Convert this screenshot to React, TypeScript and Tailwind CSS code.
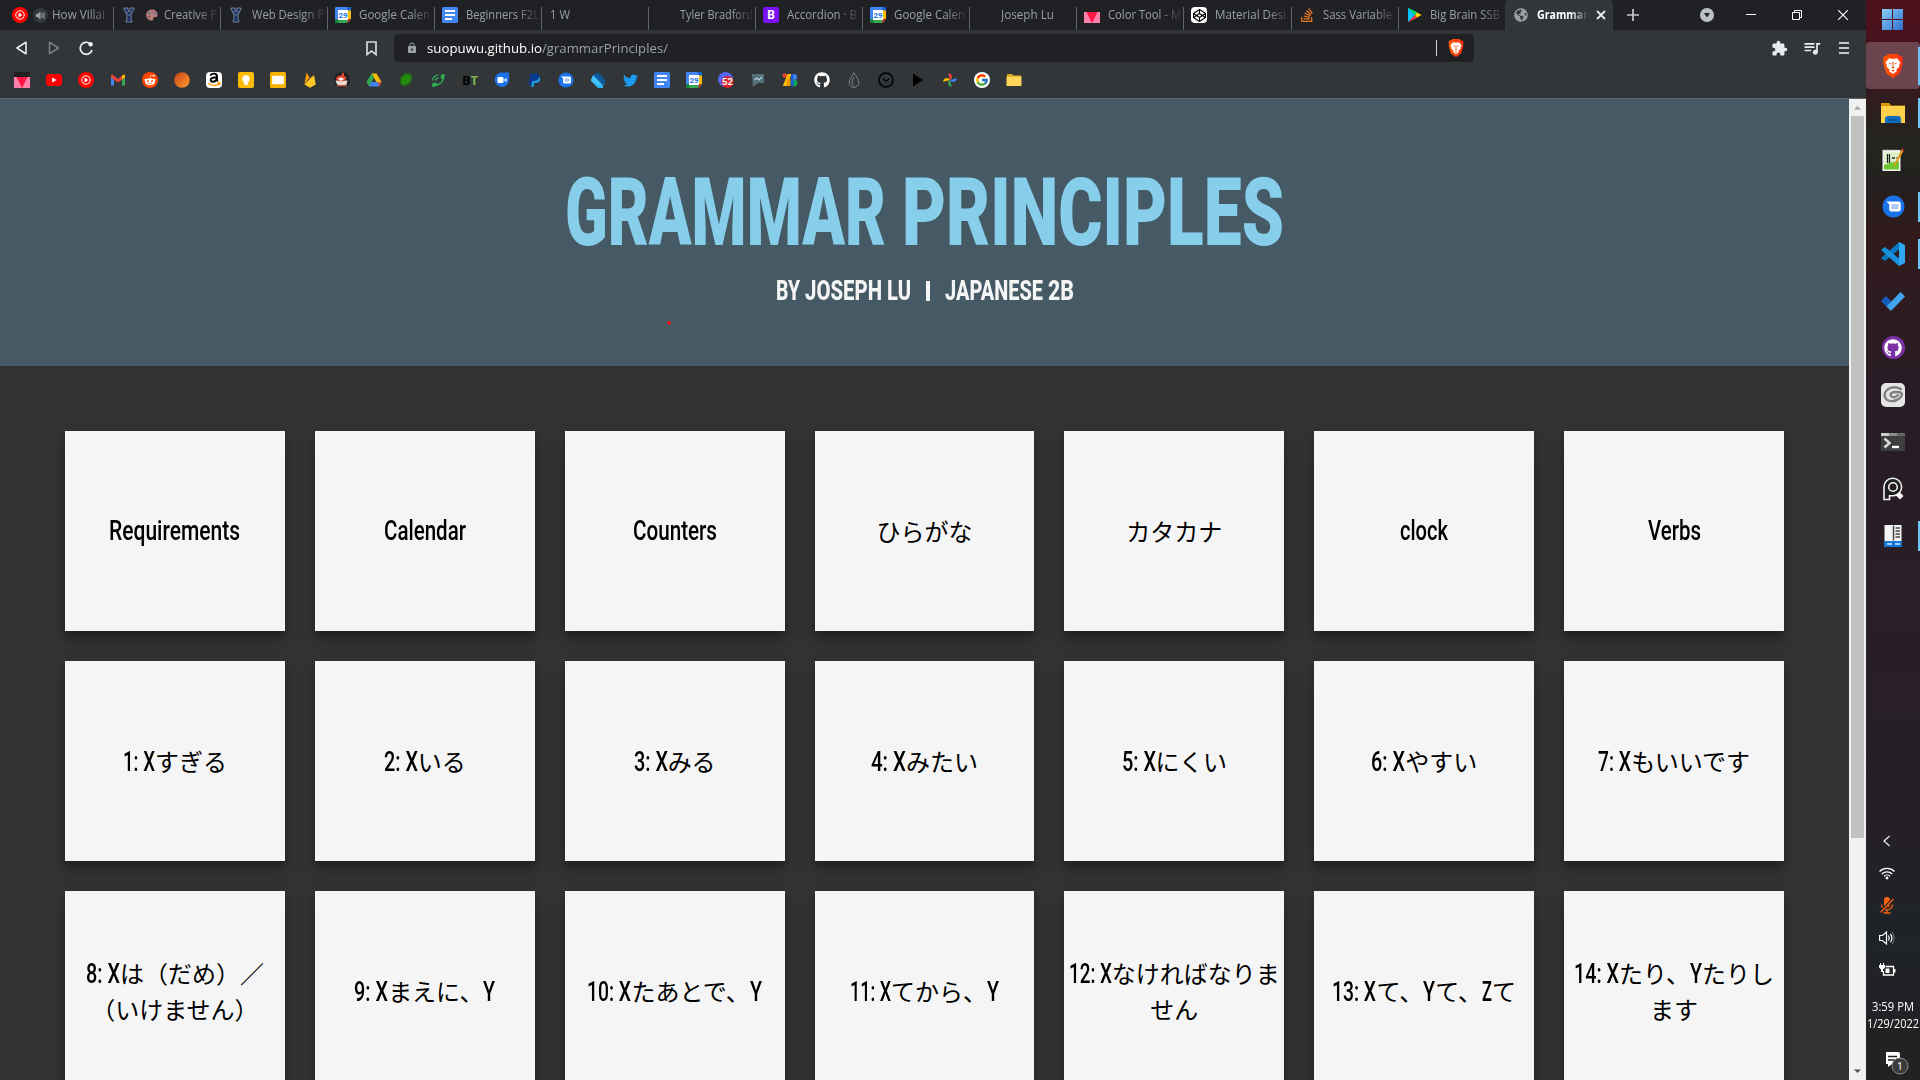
import { useLayoutEffect, useRef, useState, type ReactNode } from "react";
import { FaGithub, FaTwitter, FaPaypal, FaAmazon, FaRedditAlien, FaStackOverflow, FaCodepen, FaGlobeAmericas } from "react-icons/fa";
import { FcGoogle } from "react-icons/fc";
import { MdExtension, MdQueueMusic, MdLock, MdPhoneInTalk } from "react-icons/md";

/* Text squeezed or stretched horizontally to an exact width. */
function Fit({ w, className = "", children }: { w: number; className?: string; children: ReactNode }) {
  const ref = useRef<HTMLSpanElement>(null);
  const [s, setS] = useState(1);
  useLayoutEffect(() => {
    const el = ref.current;
    if (el && el.offsetWidth) setS(w / (el.getBoundingClientRect().width / s));
  }, [w]);
  return (
    <span className="inline-block whitespace-pre text-left" style={{ width: w }}>
      <span ref={ref} className={"inline-block origin-left " + className} style={{ transform: `scaleX(${s})` }}>
        {children}
      </span>
    </span>
  );
}

/* ---------- small icons ---------- */
const I = ({ children, s = 16 }: { children: ReactNode; s?: number }) => (
  <svg width={s} height={s} viewBox="0 0 16 16" className="block shrink-0">{children}</svg>
);
const YTMusic = () => (
  <I><circle cx="8" cy="8" r="8" fill="#f00" /><circle cx="8" cy="8" r="4.200" fill="none" stroke="#fff" /><path d="M6.500 5.600v4.800L10.400 8z" fill="#fff" /></I>
);
const Yorba = () => (
  <I><path d="M3 1h4v2l1 2 1-2V1h4v2l-1 .5L10 8v5l1 .5V15H5v-1.500l1-.5V8L4 3.500 3 3z" fill="#1b2f5e" stroke="#8b97b3" strokeWidth=".8" /><path d="M5 4l3 5 3-5" fill="none" stroke="#8b97b3" strokeWidth=".5" /></I>
);
const Palette = () => (
  <svg width="12" height="12" viewBox="0 0 12 12" className="block shrink-0">
    <path d="M6 .5a5.500 5.500 0 1 0 1 10.800c1-.4-.6-1.800.4-2.800 1-.9 4 .6 4.100-2.500C11.500 2.500 9 .5 6 .5z" fill="#b8817e" />
    <circle cx="3.400" cy="4.200" r="1.100" fill="#3b8a5a" /><circle cx="6.300" cy="2.600" r="1.100" fill="#b54a8a" /><circle cx="9" cy="4.500" r="1" fill="#3f66ad" /><circle cx="3.200" cy="7.500" r="1" fill="#803b3b" />
  </svg>
);
const Calendar = () => (
  <I>
    <path d="M1 0h11v4H0V1a1 1 0 0 1 1-1z" fill="#4285f4" /><path d="M0 3.500h4V13H0z" fill="#4285f4" />
    <path d="M12 0h3a1 1 0 0 1 1 1v3h-4z" fill="#1967d2" /><path d="M12.500 3.500H16V12h-3.500z" fill="#fbbc04" />
    <path d="M0 12.500h12.500V16H1a1 1 0 0 1-1-1z" fill="#34a853" /><path d="M0 12.500h3.500V16H1a1 1 0 0 1-1-1z" fill="#188038" /><path d="M12.500 12.500H16L12.500 16z" fill="#ea4335" />
    <path d="M3 3h10v10H3z" fill="#fff" />
    <text x="8" y="10.800" fontSize="8" fontWeight="700" textAnchor="middle" fill="#1a73e8" fontFamily="Roboto, sans-serif">29</text>
  </I>
);
const Docs = () => (
  <I><rect width="16" height="16" rx="1.500" fill="#4285f4" /><path d="M3 4h10M3 8h10M3 12h7" stroke="#fff" strokeWidth="1.800" /></I>
);
const Bootstrap = () => (
  <I><rect width="16" height="16" rx="2" fill="#7a11f8" /><text x="8" y="12.300" fontSize="12" fontWeight="700" textAnchor="middle" fill="#fff" fontFamily="Roboto, sans-serif">B</text></I>
);
const ColorTool = () => (
  <I><path d="M0 0h16v5H0z" fill="#212121" /><path d="M0 5h16v11H0z" fill="#ff80ab" /><path d="M2.500 5h11L8 16z" fill="#ff1744" /></I>
);
const Codepen = () => (
  <span className="flex size-4 items-center justify-center rounded-sm bg-white text-black"><FaCodepen size={13} /></span>
);
const Play = () => (
  <I>
    <path d="M2 .8v14.400L9 8z" fill="#00c3ff" /><path d="M2 .8 11.500 5.600 9 8z" fill="#00e676" /><path d="M2 15.200 11.500 10.400 9 8z" fill="#ff3a44" /><path d="M11.300 5.500 15.500 8l-4.200 2.500L9 8z" fill="#ffd500" />
  </I>
);
const Brave = ({ w, h }: { w: number; h: number }) => (
  <svg width={w} height={h} viewBox="0 0 20 24" className="block shrink-0">
    <defs><linearGradient id="bg" x1="0" x2="1"><stop offset="0" stopColor="#ff5a00" /><stop offset="1" stopColor="#fa2d12" /></linearGradient></defs>
    <path d="M5 0h10l2 2.200 1.800-.2L20 5l-.7 2 .5 2-2.800 9.500Q16 20 14 21.400L10 24l-4-2.600Q4 20 3 18.500L.2 9l.5-2L0 5l1.200-3L3 2.200z" fill="url(#bg)" />
    <path d="M6 4.200 10 5l4-.8 3.500 4.300-1.300 2.200.2 2-3 2.900.4 1.700L10 20l-3.800-2.700.4-1.700-3-2.900.2-2-1.300-2.200z" fill="#fff" />
    <path d="M5.500 8.700l3 .8-.8 1zM14.500 8.700l-3 .8.800 1zM9.400 8h1.200l-.2 4.500 1.300 1.300-1.700.8-1.700-.8 1.300-1.300zM8.200 16.600l1.800-.8 1.800.8-1.800 1.200z" fill="#fb4a10" />
  </svg>
);
const Messages = ({ s = 16 }: { s?: number }) => (
  <I s={s}><circle cx="8" cy="8" r="7.600" fill="#1a73e8" /><path d="M3 4.500h8.500a1.500 1.500 0 0 1 1.500 1.500v4a1.500 1.500 0 0 1-1.500 1.500h-5A1.500 1.500 0 0 1 5 10V6.500z" fill="#fff" /><path d="M6.500 6.300h5v3.600h-5z" fill="#aecbfa" /></I>
);
const Folder = () => (
  <I><path d="M1 2h5l1.500 1.500H15V6H1z" fill="#d9a520" /><path d="M.5 4.500h15V14H.5z" fill="#ffd65a" /></I>
);

const bookmarks: ReactNode[] = [
  <ColorTool />,
  <I><rect y="2" width="16" height="12" rx="3" fill="#f00" /><path d="M6.200 5.600v4.800L10.500 8z" fill="#fff" /></I>,
  <YTMusic />,
  <I><path d="M1 4v9.500h3V8z" fill="#4285f4" /><path d="M15 4v9.500h-3V8z" fill="#34a853" /><path d="M1 3l1.500-.5L8 7l5.500-4.500L15 3v2.500L8 10.500 1 5.500z" fill="#ea4335" /><path d="M12 4v3.600l3-2.200V3l-1.500-.5z" fill="#fbbc04" /></I>,
  <span className="flex size-4 items-center justify-center rounded-full bg-[#ff4500] text-white"><FaRedditAlien size={12} /></span>,
  <I><defs><linearGradient id="or" x1="0" y1="0" x2="1" y2="1"><stop offset="0" stopColor="#c9421c" /><stop offset="1" stopColor="#ff9c2a" /></linearGradient></defs><circle cx="8" cy="8" r="7.800" fill="url(#or)" /></I>,
  <span className="flex size-4 items-center justify-center overflow-hidden rounded-sm bg-white">
    <I><path d="M4.500 3.800Q5 1.600 8 1.600q3 0 3 2.800v3.200q0 1 .8 1.800M11 5.200q-6.300 0-6.300 2.600 0 1.900 2 1.900Q10.500 9.500 11 6" fill="none" stroke="#000" strokeWidth="1.900" /><path d="M2 11.300q6 4.200 11 .6M11.300 11l2.700-.2-.6 2.400" fill="none" stroke="#f90" strokeWidth="1.300" /></I>
  </span>,
  <I><rect width="16" height="16" rx="2" fill="#fbbc04" /><circle cx="8" cy="7" r="3.700" fill="#fff" /><path d="M6.200 10h3.600v3H6.200z" fill="#fff" /></I>,
  <I><rect width="16" height="16" rx="1.500" fill="#f4b400" /><path d="M2.200 3.800h11.600v8.400H2.200z" fill="#fff" /></I>,
  <I><path d="M2.500 12 4.500.5l3 5z" fill="#ffa000" /><path d="m2.500 12.500 7-8 1.500 3z" fill="#f57c00" /><path d="M2.500 12.500 12 3l1.800 9.500L8 15.800z" fill="#ffca28" /></I>,
  <I><circle cx="8" cy="8" r="8" fill="#1f2225" /><path d="M1.500 8.500h12l-1 4q-5 2-9.500 0z" fill="#f0d9cf" /><path d="M2 7Q3 3 7 4q1-4 3-3-1 3 2 4 1 3-3 4-4 1-7-2z" fill="#e8462e" /><path d="M4 7q3-3 6 0l-3 2z" fill="#fff" /><path d="M3 13.800h10" stroke="#b5553c" strokeWidth="1.500" /></I>,
  <I><path d="M5.500 1.500h5l5 8.500h-5z" fill="#fbbc04" /><path d="M5.500 1.500 8 5.700 3 14.500.5 10z" fill="#34a853" /><path d="M5.500 10h10L13 14.500H3z" fill="#4285f4" /><path d="M12 10h3.500L13 14.500z" fill="#ea4335" /></I>,
  <I><ellipse cx="8" cy="7.500" rx="6.300" ry="4.600" transform="rotate(-48 8 7.500)" fill="#258a10" /><ellipse cx="8" cy="7.500" rx="7" ry="5.400" transform="rotate(-48 8 7.500)" fill="none" stroke="#1d7a0a" strokeWidth="1.400" strokeDasharray="1 1.200" /></I>,
  <span className="text-[#2dab55]"><MdPhoneInTalk size={17} className="-scale-x-100" /></span>,
  <span className="flex w-4 justify-center font-['Open_Sans',sans-serif] text-[13px] leading-4 font-bold"><span className="text-black">B</span><span className="text-[#7fb24a]">T</span></span>,
  <I><path d="M8 .5h7v7.500A7.200 7.200 0 1 1 8 .5z" fill="#1a73e8" /><rect x="3.500" y="5" width="6" height="6" rx="1.300" fill="#fff" /><path d="m10 8 2.500-2.300v4.600z" fill="#fff" /></I>,
  <I><path d="M4.500 1.500h5.500q3.500.3 3 3.700-.8 3.800-4.800 3.800H6.300L5.500 13.500h-3z" fill="#0a3c94" /><path d="M13.300 4.800q1.500 1 .9 3-.9 3.200-4.500 3.200H8.300l-.7 4H5.200l1-6h2.500q3.700-.2 4.600-4.200z" fill="#1a9be0" /></I>,
  <Messages />,
  <I><path d="M3 3 8 .5l7 7V13h-2z" fill="#0d5a9c" /><path d="M3 3 .8 8.500 5 13l8 .3z" fill="#40c4ff" /><path d="M5 13h8v3H8z" fill="#29b6f6" /></I>,
  <span className="text-[#1d9bf0]"><FaTwitter size={15} /></span>,
  <Docs />,
  <Calendar />,
  <I><circle cx="7.500" cy="7.500" r="7.500" fill="#5865f2" /><circle cx="9.500" cy="10" r="6" fill="#d8222a" /><text x="9.500" y="13.300" fontSize="9.500" fontWeight="700" textAnchor="middle" fill="#fff" fontFamily="Roboto, sans-serif">52</text></I>,
  <I><path d="M2 2h12v9H8l-5 4z" fill="#546e7a" /><path d="m4.500 8 2.500-2 2 2 3-3" fill="none" stroke="#b4d6e4" strokeWidth="1.200" /></I>,
  <I><circle cx="2.800" cy="3.500" r="2.200" fill="#ea4335" /><path d="M5.500 2h4L5 14H.8z" fill="#fbbc04" /><path d="M4.500 7h4v7h-4z" fill="#f29900" /><circle cx="12" cy="5" r="3" fill="#4285f4" /><circle cx="12" cy="11" r="3.500" fill="#0f9d58" /><path d="M9 2h2.500v12H9z" fill="#1a5fd0" /></I>,
  <span className="text-white"><FaGithub size={16} /></span>,
  <I><path d="M8 .8Q3.200 7.500 3.200 10.600a4.800 4.800 0 0 0 9.600 0Q12.800 7.500 8 .8zM8 5Q5.500 9 6 11t2 2.500" fill="none" stroke="#808488" strokeWidth="1" /></I>,
  <I><circle cx="8" cy="8" r="7" fill="none" stroke="#000" strokeWidth="1.600" /><path d="m4.800 6.500 3.200 2.700 3.600-2.700" fill="none" stroke="#000" strokeWidth="1.200" /></I>,
  <I><path d="M3 1.500v13L13 8z" fill="#000" /></I>,
  <I><path d="M8 1a3.600 3.600 0 0 1 0 7z" fill="#ea4335" transform="rotate(-14 8 8)" /><path d="M15 8a3.600 3.600 0 0 1-7 0z" fill="#4285f4" transform="rotate(-14 8 8)" /><path d="M8 15a3.600 3.600 0 0 1 0-7z" fill="#34a853" transform="rotate(-14 8 8)" /><path d="M1 8a3.600 3.600 0 0 1 7 0z" fill="#fbbc04" transform="rotate(-14 8 8)" /></I>,
  <span className="flex size-4 items-center justify-center rounded-full bg-white"><FcGoogle size={14} /></span>,
  <Folder />,
];

/* ---------- tabs ---------- */
type Tab = { lead: ReactNode; text: string; w: number };
const tabs: Tab[] = [
  {
    lead: (
      <span className="ml-3 mr-1 flex items-center gap-[5px]">
        <YTMusic />
        <svg width="15" height="15" viewBox="0 0 15 15"><circle cx="7.500" cy="7.500" r="7.500" fill="#34373a" /><path d="M3 6h1.500L7.500 3.300v8.400L4.500 9H3z" fill="#9aa0a6" /><path d="M9 5v5M11 4v7" stroke="#9aa0a6" /></svg>
      </span>
    ), text: "How Villai", w: 53,
  },
  { lead: <span className="ml-[7px] mr-1.5 flex items-center gap-[9px]"><Yorba /><Palette /></span>, text: "Creative P", w: 53 },
  { lead: <span className="ml-[7px] mr-2"><Yorba /></span>, text: "Web Design P", w: 72 },
  { lead: <span className="ml-[7px] mr-2"><Calendar /></span>, text: "Google Calen", w: 71 },
  { lead: <span className="ml-[7px] mr-2"><Docs /></span>, text: "Beginners F2L", w: 73 },
  { lead: <span className="ml-2" />, text: "1 W", w: 20 },
  { lead: <span className="ml-[31px]" />, text: "Tyler Bradford", w: 73 },
  { lead: <span className="ml-[7px] mr-2"><Bootstrap /></span>, text: "Accordion · B", w: 70 },
  { lead: <span className="ml-[7px] mr-2"><Calendar /></span>, text: "Google Calen", w: 71 },
  { lead: <span className="ml-[31px]" />, text: "Joseph Lu", w: 53 },
  { lead: <span className="ml-[7px] mr-2"><ColorTool /></span>, text: "Color Tool - M", w: 73 },
  { lead: <span className="ml-[7px] mr-2"><Codepen /></span>, text: "Material Desi", w: 71 },
  { lead: <span className="ml-[7px] mr-2 text-[#e87922]"><FaStackOverflow size={16} /></span>, text: "Sass Variable", w: 69 },
  { lead: <span className="ml-[7px] mr-2"><Play /></span>, text: "Big Brain SSB", w: 70 },
];

function TabStrip() {
  return (
    <div className="flex h-[30px] bg-[#202124] font-['Open_Sans',sans-serif] text-[12px]">
      {tabs.map((t, i) => (
        <div key={i} className={(i === 0 ? "w-[113.500px]" : i === 13 ? "w-[106px]" : "w-[107.100px]") + " flex h-full shrink-0 items-end"}>
          <div className="flex h-[30px] min-w-0 flex-1 items-center">
            {t.lead}
            <span className="flex-1 whitespace-nowrap text-[#9aa0a6] [mask-image:linear-gradient(to_left,transparent,black_24px)]"><Fit w={t.w}>{t.text}</Fit></span>
          </div>
          {i < tabs.length - 1 && <div className="h-[23px] w-px bg-[#5f6266]" />}
        </div>
      ))}
      <div className="flex h-full w-[108px] shrink-0 items-center rounded-t bg-[#323639] pl-[9px]">
        <span className="text-[#9aa0a6]"><FaGlobeAmericas size={14} /></span>
        <span className="ml-[9px] w-[51px] whitespace-nowrap font-bold text-white [mask-image:linear-gradient(to_left,transparent,black_18px)]"><Fit w={51}>Grammar</Fit></span>
        <svg width="10" height="10" viewBox="0 0 10 10" className="ml-2"><path d="m1 1 8 8M9 1 1 9" stroke="#e8eaed" strokeWidth="1.800" /></svg>
      </div>
      <div className="flex flex-1 items-center pl-3.5">
        <svg width="12" height="12" viewBox="0 0 12 12"><path d="M6 0v12M0 6h12" stroke="#c5c8cc" strokeWidth="1.700" /></svg>
        <svg width="14" height="14" viewBox="0 0 14 14" className="ml-[61px]"><circle cx="7" cy="7" r="7" fill="#bdc1c6" /><path d="M4 5h6L7 9.500z" fill="#202124" /></svg>
        <svg width="10" height="10" viewBox="0 0 10 10" className="ml-8"><path d="M0 4.500h10" stroke="#fff" /></svg>
        <svg width="10" height="10" viewBox="0 0 10 10" className="ml-9"><path d="M.5 2.500h7v7h-7zM2.500 2.500v-2h7v7h-2" fill="none" stroke="#fff" /></svg>
        <svg width="10" height="10" viewBox="0 0 10 10" className="ml-9"><path d="m0 0 10 10M10 0 0 10" stroke="#fff" strokeWidth="1.100" /></svg>
      </div>
    </div>
  );
}

function Toolbar() {
  return (
    <div className="flex h-9 items-center bg-[#323639]">
      <svg width="12" height="14" viewBox="0 0 12 14" className="ml-[16px]"><path d="M10 1.200v11.600L1 7z" fill="none" stroke="#f1f3f4" strokeWidth="1.500" strokeLinejoin="round" /></svg>
      <svg width="12" height="14" viewBox="0 0 12 14" className="ml-5"><path d="M1.500 1.200v11.600l9-5.800z" fill="none" stroke="#7d8185" strokeWidth="1.500" strokeLinejoin="round" /></svg>
      <svg width="15" height="15" viewBox="0 0 15 15" className="ml-[19px]"><path d="M11 2.600A6 6 0 1 0 13 9" fill="none" stroke="#f1f3f4" strokeWidth="1.700" /><circle cx="11.600" cy="3.200" r="2.200" fill="#f1f3f4" /></svg>
      <svg width="11" height="15" viewBox="0 0 11 15" className="ml-[272px]"><path d="M1 1h9v12.500L5.500 10 1 13.500z" fill="none" stroke="#d5d8db" strokeWidth="1.700" /></svg>
      <div className="ml-[17px] flex h-7 w-[1080px] items-center rounded bg-[#202124]">
        <span className="ml-3 text-[#9aa0a6]"><MdLock size={12} /></span>
        <span className="ml-[9px] pt-px font-['Open_Sans',sans-serif] text-[13px]">
          <Fit w={115} className="text-white">suopuwu.github.io</Fit>
          <Fit w={126} className="text-[#9aa0a6]">/grammarPrinciples/</Fit>
        </span>
        <span className="ml-auto h-4 w-px bg-[#d0d2d4]" />
        <span className="ml-[11px] mr-2.5"><Brave w={16} h={18} /></span>
      </div>
      <div className="ml-auto mr-[17px] flex items-center text-[#e8eaed]">
        <MdExtension size={17} />
        <span className="ml-3.5"><MdQueueMusic size={20} /></span>
        <svg width="10" height="12" viewBox="0 0 10 12" className="ml-[17px]"><path d="M0 1h10M0 6h10M0 11h10" stroke="#c8cbce" strokeWidth="2" /></svg>
      </div>
    </div>
  );
}

/* ---------- page ---------- */
type Part = string | { t: string; w: number };
const L = (t: string, w: number): Part => ({ t, w });
const cards: Part[][][] = [
  [[L("Requirements", 131)]], [[L("Calendar", 82)]], [[L("Counters", 84)]], [["ひらがな"]], [["カタカナ"]], [[L("clock", 48)]], [[L("Verbs", 53)]],
  [[L("1: X", 32), "すぎる"]], [[L("2: X", 34), "いる"]], [[L("3: X", 34), "みる"]], [[L("4: X", 35), "みたい"]], [[L("5: X", 34), "にくい"]], [[L("6: X", 34), "やすい"]], [[L("7: X", 33), "もいいです"]],
  [[L("8: X", 34), "は（だめ）／"], ["（いけません）"]], [[L("9: X", 34), "まえに、", L("Y", 12)]], [[L("10: X", 44), "たあとで、", L("Y", 12)]],
  [[L("11: X", 41), "てから、", L("Y", 12)]], [[L("12: X", 43), "なければなりま"], ["せん"]], [[L("13: X", 44), "て、", L("Y", 12), "て、", L("Z", 10), "て"]],
  [[L("14: X", 45), "たり、", L("Y", 12), "たりし"], ["ます"]],
];

function Page() {
  return (
    <main className="h-full flex-1 overflow-hidden bg-[#333333]">
      <header className="flex h-[267px] flex-col items-center bg-[#455a64]">
        <h1 className="mt-[59px] flex h-[110px] gap-[16px] font-[Roboto,sans-serif] text-[94px] leading-[110px] font-black text-[#87ceeb]">
          <Fit w={321}>GRAMMAR</Fit>
          <Fit w={382}>PRINCIPLES</Fit>
        </h1>
        <p className="relative mt-[5px] flex h-9 font-[Roboto,sans-serif] text-[28px] leading-9 font-extrabold text-[#f5f5f5]">
          <span className="flex gap-[5px]"><Fit w={24}>BY</Fit><Fit w={77}>JOSEPH</Fit><Fit w={24}>LU</Fit></span>
          <span className="mx-[15px] mt-2 h-5 w-1 bg-[#f5f5f5]" />
          <span className="flex gap-[5px]"><Fit w={98}>JAPANESE</Fit><Fit w={26}>2B</Fit></span>
          <span className="absolute top-[48px] -left-[109px] size-1 rounded-full bg-[#e8141c]" />
        </p>
      </header>
      <div className="grid grid-cols-7 gap-[30px] px-[65px] pt-[65px]">
        {cards.map((lines, i) => (
          <div key={i} className="flex h-[200px] flex-col items-center justify-center bg-[#f5f5f5] font-['Noto_Sans_CJK_JP',sans-serif] text-2xl text-black shadow-[0_10px_20px_rgba(0,0,0,0.19),0_6px_6px_rgba(0,0,0,0.23)]">
            {lines.map((parts, j) => (
              <div key={j} className={"flex h-9 items-baseline leading-9 whitespace-nowrap" + (parts.length === 1 && typeof parts[0] !== "string" ? " -mt-0.5" : "")}>
                {parts.map((p, k) =>
                  typeof p === "string" ? <span key={k}>{p}</span> : <Fit key={k} w={p.w} className="font-[Roboto,sans-serif] text-[28px] leading-9 font-medium">{p.t}</Fit>,
                )}
              </div>
            ))}
          </div>
        ))}
      </div>
    </main>
  );
}

function Scrollbar() {
  return (
    <div className="flex w-[17px] flex-col items-center bg-[#f1f1f1]">
      <svg width="17" height="17" viewBox="0 0 17 17"><path d="M5 10.500h7L8.500 7z" fill="#a3a3a3" /></svg>
      <div className="h-[722px] w-[13px] bg-[#c1c1c1]" />
      <svg width="17" height="17" viewBox="0 0 17 17" className="mt-auto"><path d="M5 6.500h7L8.500 10z" fill="#505050" /></svg>
    </div>
  );
}

/* ---------- taskbar ---------- */
const T = ({ children }: { children: ReactNode }) => <svg width="24" height="24" viewBox="0 0 24 24" className="block">{children}</svg>;
const apps: { icon: ReactNode; open?: boolean; active?: boolean }[] = [
  { icon: <Brave w={20} h={24} />, open: true, active: true },
  { icon: <T><path d="M0 2h8l2 2.500h14V10H0z" fill="#d99a00" /><path d="M0 5h24v17H0z" fill="#ffd04a" /><path d="M4 22v-4q0-3 3-3h10q3 0 3 3v4z" fill="#0f6cc0" /><path d="M7 19h10" stroke="#0a4a86" strokeWidth="1.200" /></T>, open: true },
  { icon: <T><path d="M1.500 2h18v21h-18z" fill="#f4f4f4" /><path d="M3 10h15v11.500H3z" fill="#6cc832" /><path d="M3 4h15v9q-8 1-15 4z" fill="#dff2cb" /><path d="M6.500 6v9M8.500 6v9M11 10h3M15.500 10h2" stroke="#222" strokeWidth="1.300" /><path d="M3 1v2M6 1v2M9 1v2M12 1v2M15 1v2" stroke="#999" /><path d="m12 19 8-17 2.500 1L14 18z" fill="#e79a1c" /><path d="m20 2 .8-1.800 2.200 1L22.500 3z" fill="#d83030" /></T> },
  { icon: <Messages s={23} />, open: true },
  { icon: <T><path d="M18 0 24 3v18l-6 3z" fill="#2fa6f2" /><path d="M18 0v7.500L4 19l-4-3z" fill="#0b77c2" /><path d="m0 8 4-3 14 11.500V24z" fill="#1791dd" /></T>, open: true },
  { icon: <T><path d="m0 12 5-5 6 6-4.500 5.500z" fill="#185abd" /><path d="M5.500 17.500 19.500 3 24 7.500 10 22z" fill="#41a5ee" /></T> },
  { icon: <span className="flex size-[23px] items-center justify-center rounded-full bg-[#7a31a5] text-white"><FaGithub size={18} /></span> },
  { icon: <T><rect width="24" height="24" rx="5" fill="#e6e6e6" /><path d="M20 6Q12 2 6 7q-5 5 0 10 7 3 13-2 5-6-3-6-8 0-6 4 3 3 7-1" fill="none" stroke="#808080" strokeWidth="2.400" strokeLinecap="round" /></T> },
  { icon: <T><path d="M0 3h24v18H0z" fill="#3e3e3e" /><path d="M0 3h8v3H0z" fill="#ccc" /><path d="M8 3h8v3H8z" fill="#8d8d8d" /><path d="M16 3h8v3h-8z" fill="#666" /><path d="m3.500 8.500 5 4.500-5 4.500" fill="none" stroke="#ddd" strokeWidth="2.400" /><path d="M11 17h7" stroke="#fff" strokeWidth="2.400" /></T> },
  { icon: <T><path d="M3 22.500V10a8.800 8.800 0 1 1 9 8.800H8.500v3.700z" fill="#1d1d1f" stroke="#f2f2f2" strokeWidth="1.600" /><circle cx="12" cy="10" r="4.300" fill="#241a20" stroke="#f2f2f2" strokeWidth="1.600" /><path d="m18.500 15 4 4-3.500 3.500-4-4z" fill="#fff" /></T> },
  { icon: <T><path d="M3.500 1h17v16h-17z" fill="#f5f5f5" /><path d="M12.500 1.500v15" stroke="#444" strokeWidth="1.500" /><path d="M14.500 4h4.500M14.500 7h4.500M14.500 10h4.500M14.500 13h4.500" stroke="#444" strokeWidth="1.300" /><rect x="3" y="17" width="18" height="6" rx="1" fill="#1277d4" /><path d="M6 20h5M14 20h5" stroke="#d9ecff" strokeWidth="1.500" /></T>, open: true },
];

function Taskbar() {
  return (
    <aside className="flex w-[54px] shrink-0 flex-col bg-[linear-gradient(to_bottom,#4b101c_0px,#48121d_45px,#331a1e_90px,#22261f_145px,#241f1f_185px,#321a1c_240px,#2e1b20_290px,#271c25_420px,#2a1e27_600px,#251f26_820px,#1f2327_920px,#232124_1080px)]">
      <div className="flex h-[42px] justify-center pt-[9px]">
        <svg width="21" height="21" viewBox="0 0 21 21" className="-ml-0.5">
          <defs><linearGradient id="win" x1="0" y1="0" x2="1" y2="1"><stop offset="0" stopColor="#8cd0f8" /><stop offset="1" stopColor="#2f6fd0" /></linearGradient></defs>
          <path d="M0 0h10v10H0zM11 0h10v10H11zM0 11h10v10H0zM11 11h10v10H11z" fill="url(#win)" />
        </svg>
      </div>
      {apps.map((a, i) => (
        <div key={i} className={"flex h-[47px] items-center " + (a.active ? "rounded bg-[#6c444e]" : "")}>
          <div className="flex flex-1 justify-center pl-0.5">{a.icon}</div>
          <div className={a.open ? (a.active ? "h-[38px] w-0.5 bg-[#6cc4f5]" : "h-[30px] w-0.5 bg-[#6cc4f5]") : "w-0.5"} />
        </div>
      ))}
      <div className="mt-auto flex flex-col items-center text-white">
        <div className="mr-3 flex flex-col items-center gap-4">
          <svg width="16" height="16" viewBox="0 0 16 16"><path d="M10.500 3 5 8l5.500 5" fill="none" stroke="#eee" strokeWidth="1.200" /></svg>
          <svg width="16" height="16" viewBox="0 0 16 16"><path d="M.5 6.500a10.500 10.500 0 0 1 15 0M2.800 9a7.300 7.300 0 0 1 10.400 0M5 11.200a4.300 4.300 0 0 1 6 0" fill="none" stroke="#fff" strokeWidth="1.200" /><circle cx="8" cy="13" r="1.400" fill="#fff" /></svg>
          <svg width="16" height="17" viewBox="0 0 16 17"><rect x="5" y="0" width="6" height="10.500" rx="3" fill="#f7630c" /><path d="M2.500 7.500a5.500 5.500 0 0 0 11 0M8 13v3M4.500 16h7" fill="none" stroke="#f7630c" strokeWidth="1.300" /><path d="M1 15.500 15 1" stroke="#221f24" strokeWidth="3" /><path d="M1.500 15.500 14.500 2" stroke="#f7630c" strokeWidth="1.300" /></svg>
          <svg width="16" height="16" viewBox="0 0 16 16"><path d="M.6 5.500h2.800L7.500 2v12L3.400 10.500H.6z" fill="none" stroke="#fff" strokeWidth="1.200" /><path d="M9.500 5.500q1.600 2.500 0 5M11.500 3.800q2.800 4.200 0 8.400" fill="none" stroke="#fff" strokeWidth="1.200" /><path d="M13.300 2q3.800 6 0 12" fill="none" stroke="#777" /></svg>
          <svg width="17" height="16" viewBox="0 0 17 16"><path d="M6.500 4.500h8v8.500H4.500V9" fill="none" stroke="#fff" strokeWidth="1.300" /><path d="M6.500 6.500h4v4.500h-4zM15 7h1.500v3.500H15zM0 3h6v2.500L4.500 7H4v3H2V7h-.5L0 5.500zM1 1h1v2H1zM4 1h1v2H4z" fill="#fff" /></svg>
        </div>
        <div className="mt-[20px] flex flex-col items-center font-['Open_Sans',sans-serif] text-[12px] leading-[17px]">
          <Fit w={42}>3:59 PM</Fit>
          <Fit w={52}>1/29/2022</Fit>
        </div>
        <svg width="28" height="26" viewBox="0 0 28 26" className="mt-[18px] mb-[4px] ml-2">
          <path d="M3 2h12q2 0 2 2v10H9l-4 3v-3H3z" fill="#fff" /><path d="M5 6.500h9M5 10h9" stroke="#222" strokeWidth="1.300" />
          <circle cx="17" cy="16" r="8" fill="#3b3b3d" stroke="#8a8a8a" strokeWidth="1" />
          <text x="17" y="20" fontSize="11" textAnchor="middle" fill="#fff" fontFamily="Open Sans, sans-serif">1</text>
        </svg>
      </div>
    </aside>
  );
}

export default function App() {
  return (
    <div className="flex h-[1080px] w-[1920px] overflow-hidden bg-[#333333]">
      <div className="flex w-[1866px] shrink-0 flex-col">
        <TabStrip />
        <div className="h-[69px] border-b border-[#5c6569] bg-[#323639]">
          <Toolbar />
          <div className="mt-1.5 flex items-center gap-4 pl-3.5">
            {bookmarks.map((b, i) => <div key={i} className="flex size-4 items-center justify-center">{b}</div>)}
          </div>
        </div>
        <div className="flex min-h-0 flex-1">
          <Page />
          <Scrollbar />
        </div>
      </div>
      <Taskbar />
    </div>
  );
}
